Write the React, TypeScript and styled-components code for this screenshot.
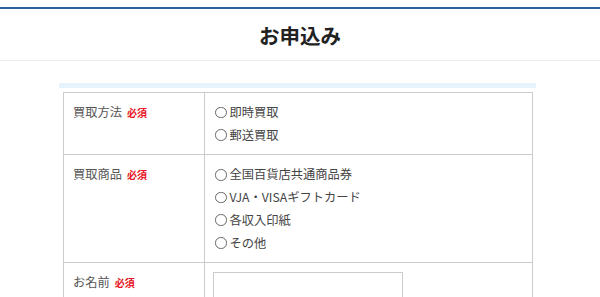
import React from "react";
import styled, { createGlobalStyle } from "styled-components";

const GlobalStyle = createGlobalStyle`
  html, body {
    margin: 0;
    padding: 0;
    background: #fff;
  }
  body {
    font-family: "Noto Sans CJK JP", "Noto Sans", sans-serif;
    color: #444;
  }
`;

const Page = styled.div`
  width: 600px;
  padding-top: 7px;
`;

const Header = styled.header`
  border-top: 2px solid #2c5f9b;
  border-bottom: 1px solid #ececec;
  height: 51px;
  display: flex;
  align-items: center;
  justify-content: center;
`;

const Title = styled.h1`
  margin: 0;
  font-size: 20.5px;
  font-weight: 700;
  color: #222;
`;

const Main = styled.main`
  padding: 22px 0 0 59px;
`;

const FormBox = styled.section`
  width: 477px;
`;

const Bar = styled.div`
  height: 5px;
  background: #e6f3fd;
`;

const Table = styled.table`
  width: 470px;
  margin: 4px 0 0 4px;
  border-collapse: collapse;
  table-layout: fixed;
`;

const LabelCol = styled.col`
  width: 141px;
`;

const Row = styled.tr``;

const Head = styled.th`
  text-align: left;
  vertical-align: top;
  font-weight: 400;
  font-size: 12.25px;
  line-height: 22.7px;
  color: #555;
  padding: 8px 8px 8px 9px;
  border: 1px solid #cbcbcb;
`;

const Cell = styled.td`
  vertical-align: top;
  padding: 8px 8px 8px 10px;
  border: 1px solid #cbcbcb;
`;

const Required = styled.span`
  margin-left: 5px;
  font-size: 10px;
  font-weight: 700;
  color: #e8141e;
`;

const Option = styled.label`
  display: flex;
  align-items: center;
  font-size: 12.25px;
  line-height: 22.7px;
  color: #444;
`;

const Circle = styled.span`
  box-sizing: border-box;
  width: 11.5px;
  height: 11.5px;
  border: 1px solid #666;
  border-radius: 50%;
  margin-right: 3px;
  flex: none;
`;

const TextBox = styled.div<{ $width: number }>`
  box-sizing: border-box;
  width: ${(p) => p.$width}px;
  height: 30px;
  margin: 1px 0 0 -2px;
  border: 1px solid #cbcbcb;
`;

const fields: { label: string; options?: string[]; input?: number }[] = [
  { label: "買取方法", options: ["即時買取", "郵送買取"] },
  {
    label: "買取商品",
    options: ["全国百貨店共通商品券", "VJA・VISAギフトカード", "各収入印紙", "その他"],
  },
  { label: "お名前", input: 190 },
];

export default function App() {
  return (
    <Page>
      <GlobalStyle />
      <Header>
        <Title>お申込み</Title>
      </Header>
      <Main>
        <FormBox>
          <Bar />
          <Table>
            <colgroup>
              <LabelCol />
              <col />
            </colgroup>
            <tbody>
              {fields.map((f) => (
                <Row key={f.label}>
                  <Head>
                    {f.label}
                    <Required>必須</Required>
                  </Head>
                  <Cell>
                    {f.options?.map((o) => (
                      <Option key={o}>
                        <Circle />
                        {o}
                      </Option>
                    ))}
                    {f.input && <TextBox $width={f.input} />}
                  </Cell>
                </Row>
              ))}
            </tbody>
          </Table>
        </FormBox>
      </Main>
    </Page>
  );
}
